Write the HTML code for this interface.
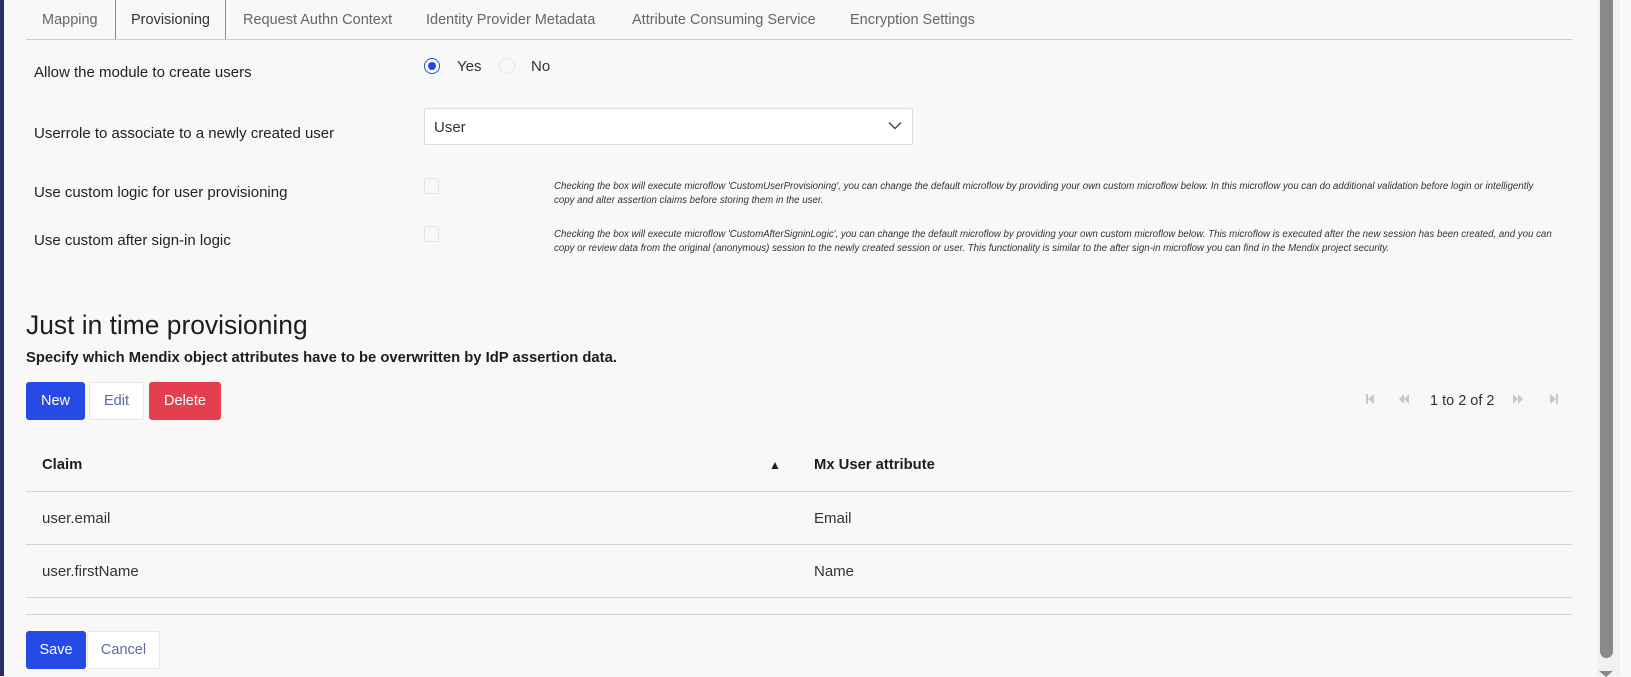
<!DOCTYPE html>
<html><head><meta charset="utf-8"><style>
*{box-sizing:border-box;margin:0;padding:0}
body{width:1631px;height:676px;background:#f8f8f8;font-family:"Liberation Sans",sans-serif;color:#1d1d1d;position:relative;overflow:hidden;font-size:14px}
.a{position:absolute;white-space:nowrap}
.tab{position:absolute;top:12px;font-size:14.5px;color:#666}
.lbl{font-size:15px;color:#222}
.help{font-size:9.7px;font-style:italic;color:#333;line-height:13.5px}
.btn{position:absolute;height:38px;border-radius:3px;font-size:14.5px;display:flex;align-items:center;justify-content:center}
.hl{position:absolute;left:26px;width:1546px;height:1px;background:#d4d4d4}
.pg{position:absolute;top:394px;width:0;height:0;border-top:5px solid transparent;border-bottom:5px solid transparent}
</style></head><body>
<div class="a" style="left:0;top:0;width:4px;height:676px;background:#2b2d66"></div>

<div class="a" style="left:115px;top:0;width:111px;height:40px;border:1px solid #8a8a8a;border-top:none;border-bottom:1px dotted #333;background:#f8f8f8"></div>
<div class="hl" style="top:39px;background:#ccc"></div>
<div class="tab" style="left:42px">Mapping</div>
<div class="tab" style="left:131px;color:#333">Provisioning</div>
<div class="tab" style="left:243px">Request Authn Context</div>
<div class="tab" style="left:426px">Identity Provider Metadata</div>
<div class="tab" style="left:632px">Attribute Consuming Service</div>
<div class="tab" style="left:850px">Encryption Settings</div>

<div class="a lbl" style="left:34px;top:64px">Allow the module to create users</div>
<div class="a" style="left:424px;top:58px;width:16px;height:16px;border-radius:50%;border:1px solid #264ae5;background:#fff"></div>
<div class="a" style="left:428px;top:62px;width:8px;height:8px;border-radius:50%;background:#264ae5"></div>
<div class="a lbl" style="left:457px;top:58px;color:#333">Yes</div>
<div class="a" style="left:499px;top:58px;width:16px;height:16px;border-radius:50%;border:1px solid #e6e6e6;background:#f8f8f8"></div>
<div class="a lbl" style="left:531px;top:58px;color:#333">No</div>

<div class="a lbl" style="left:34px;top:125px">Userrole to associate to a newly created user</div>
<div class="a" style="left:424px;top:108px;width:489px;height:37px;border:1px solid #dcdcdc;background:#fff;border-radius:2px"></div>
<div class="a lbl" style="left:434px;top:119px;color:#333">User</div>
<svg class="a" style="left:888px;top:121px" width="14" height="9" viewBox="0 0 14 9"><path d="M1 1.5l6 6 6-6" fill="none" stroke="#444" stroke-width="1.4"/></svg>

<div class="a lbl" style="left:34px;top:184px">Use custom logic for user provisioning</div>
<div class="a" style="left:424px;top:178px;width:15px;height:16px;border:1px solid #e2e2e2;border-radius:3px;background:#f8f8f8"></div>
<div class="a help" style="left:554px;top:180px">Checking the box will execute microflow 'CustomUserProvisioning', you can change the default microflow by providing your own custom microflow below. In this microflow you can do additional validation before login or intelligently<br>copy and alter assertion claims before storing them in the user.</div>

<div class="a lbl" style="left:34px;top:232px">Use custom after sign-in logic</div>
<div class="a" style="left:424px;top:226px;width:15px;height:16px;border:1px solid #e2e2e2;border-radius:3px;background:#f8f8f8"></div>
<div class="a help" style="left:554px;top:228px">Checking the box will execute microflow 'CustomAfterSigninLogic', you can change the default microflow by providing your own custom microflow below. This microflow is executed after the new session has been created, and you can<br>copy or review data from the original (anonymous) session to the newly created session or user. This functionality is similar to the after sign-in microflow you can find in the Mendix project security.</div>

<div class="a" style="left:26px;top:310px;font-size:26.4px;color:#1d1d1d">Just in time provisioning</div>
<div class="a" style="left:26px;top:350px;font-size:14.8px;font-weight:bold;color:#1d1d1d">Specify which Mendix object attributes have to be overwritten by IdP assertion data.</div>

<div class="btn" style="left:26px;top:382px;width:59px;background:#264ae5;color:#fff">New</div>
<div class="btn" style="left:89px;top:382px;width:55px;background:#fff;border:1px solid #e6e6e6;color:#5a6aa8">Edit</div>
<div class="btn" style="left:149px;top:382px;width:72px;background:#e33f4e;color:#fff">Delete</div>

<div class="pg" style="left:1368px;border-right:6px solid #c8c8c8"></div><div class="a" style="left:1366px;top:394px;width:2px;height:10px;background:#c8c8c8"></div>
<div class="pg" style="left:1399px;border-right:5px solid #c8c8c8"></div><div class="pg" style="left:1404px;border-right:5px solid #c8c8c8"></div>
<div class="a" style="left:1430px;top:393px;font-size:14.5px;color:#333">1 to 2 of 2</div>
<div class="pg" style="left:1513px;border-left:5px solid #c8c8c8"></div><div class="pg" style="left:1518px;border-left:5px solid #c8c8c8"></div>
<div class="pg" style="left:1550px;border-left:6px solid #c8c8c8"></div><div class="a" style="left:1556px;top:394px;width:2px;height:10px;background:#c8c8c8"></div>

<div class="a" style="left:42px;top:457px;font-size:14.8px;font-weight:bold">Claim</div>
<div class="a" style="left:769px;top:458px;font-size:12px">▲</div>
<div class="a" style="left:814px;top:457px;font-size:14.8px;font-weight:bold">Mx User attribute</div>
<div class="hl" style="top:491px"></div>
<div class="a lbl" style="left:42px;top:510px;color:#333">user.email</div>
<div class="a lbl" style="left:814px;top:510px;color:#333">Email</div>
<div class="hl" style="top:544px"></div>
<div class="a lbl" style="left:42px;top:563px;color:#333">user.firstName</div>
<div class="a lbl" style="left:814px;top:563px;color:#333">Name</div>
<div class="hl" style="top:597px"></div>
<div class="hl" style="top:614px"></div>

<div class="btn" style="left:26px;top:631px;width:60px;background:#264ae5;color:#fff">Save</div>
<div class="btn" style="left:87px;top:631px;width:73px;background:#fff;border:1px solid #e6e6e6;color:#5a6aa8">Cancel</div>

<div class="a" style="left:1597px;top:0;width:20px;height:676px;background:#f1f1f1"></div>
<div class="a" style="left:1600px;top:0;width:13px;height:658px;background:#8a8a8a;border-radius:0 0 7px 7px"></div>
<div class="a" style="left:1599px;top:671px;width:0;height:0;border-left:7px solid transparent;border-right:7px solid transparent;border-top:6px solid #8a8a8a"></div>
<div class="a" style="left:1618px;top:0;width:1px;height:676px;background:#e4e4e4"></div>
</body></html>
